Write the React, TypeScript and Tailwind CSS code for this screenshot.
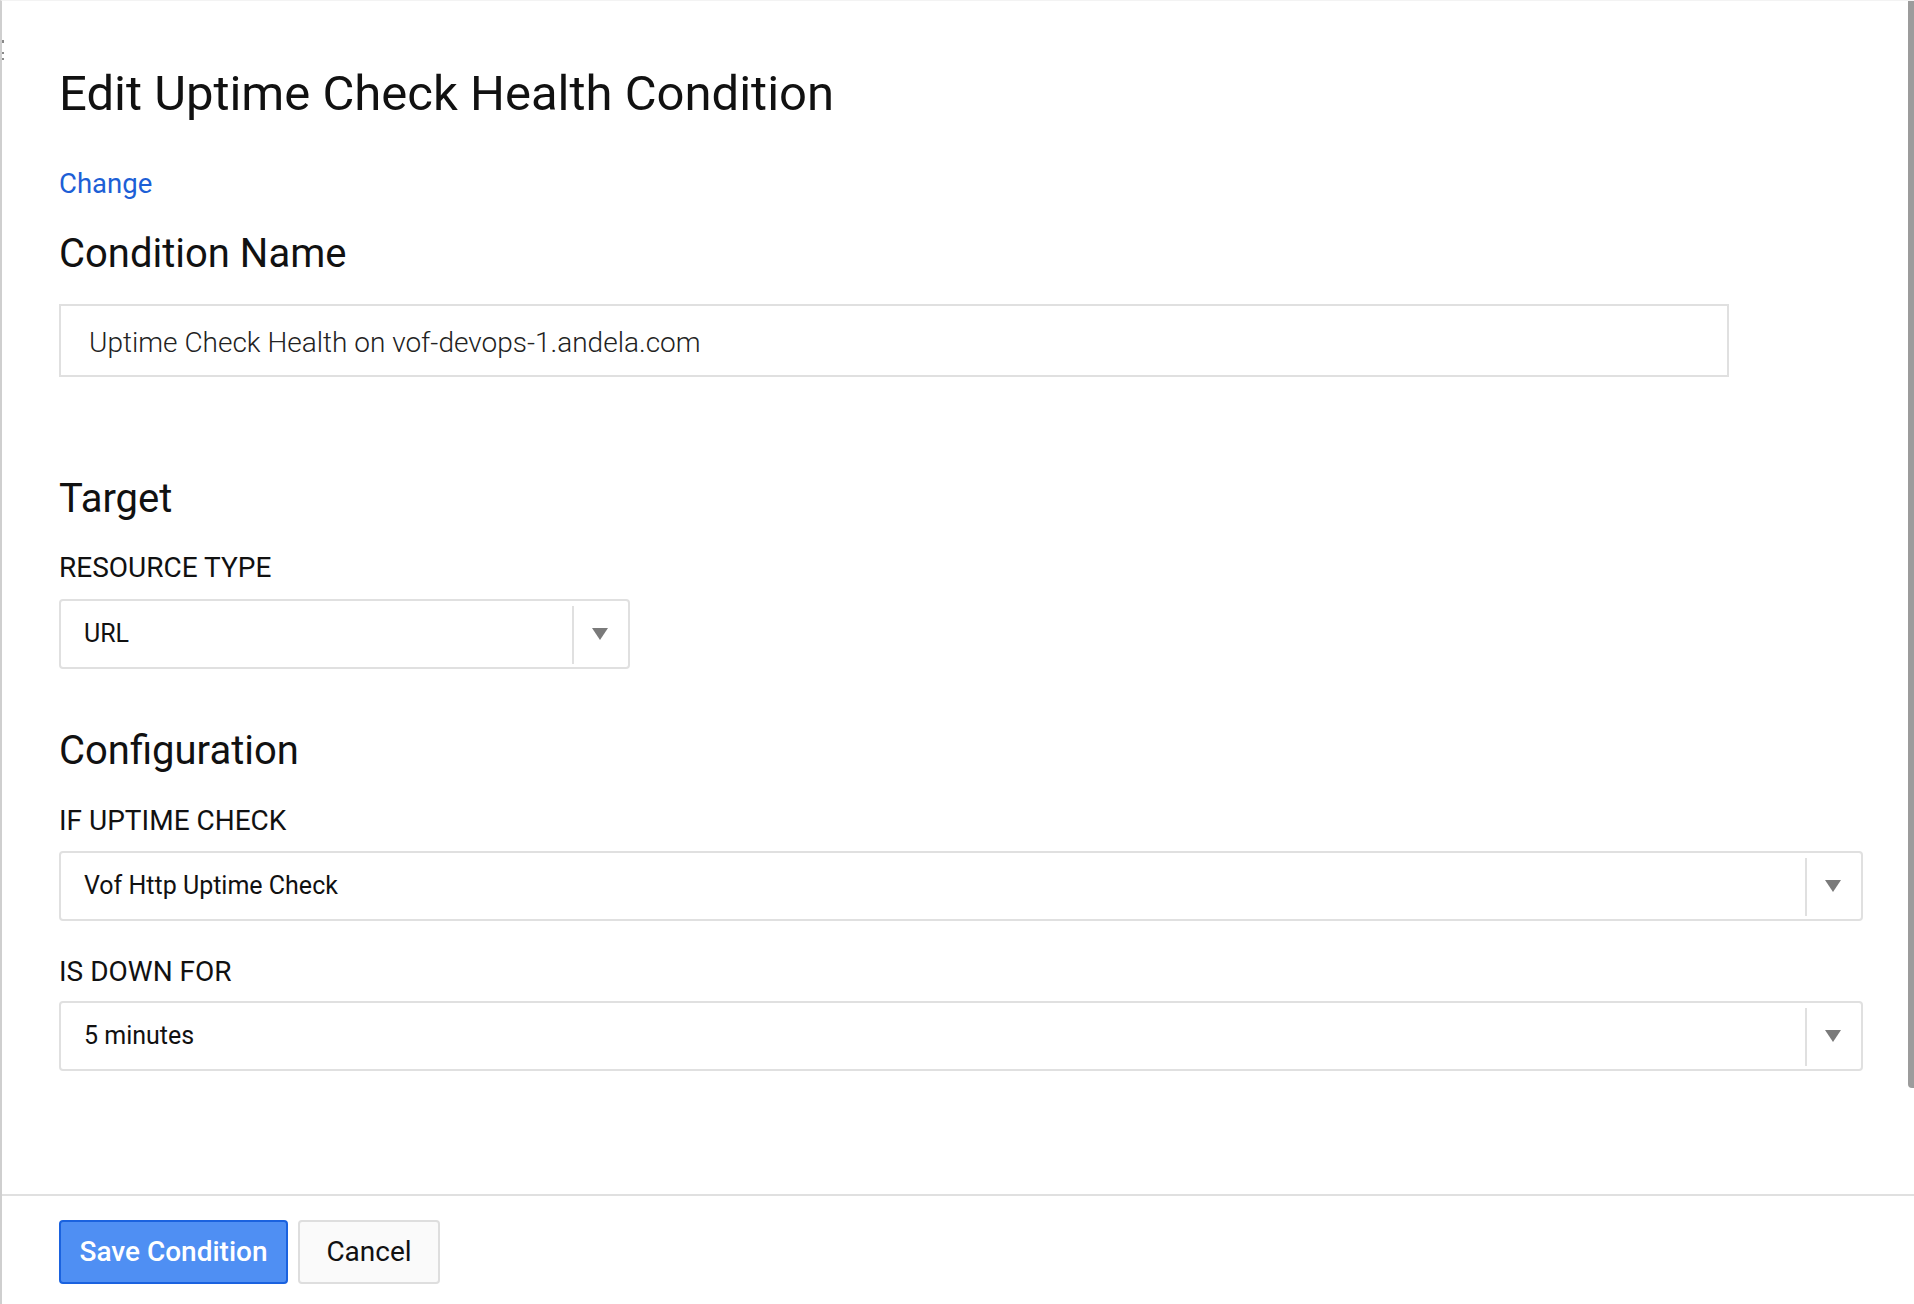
import { ReactNode } from 'react';

const font = { fontFamily: 'Roboto, "Liberation Sans", sans-serif' };

function Caret() {
  return (
    <svg width="16" height="12" viewBox="0 0 16 12" className="block">
      <path d="M0 0 H16 L8 12 Z" fill="#7a7a7a" />
    </svg>
  );
}

function Select({ value, width }: { value: string; width: string }) {
  return (
    <div className={`flex h-[70px] ${width} items-stretch rounded-[4px] border-2 border-[#e0e0e0] bg-white`}>
      <div className="flex flex-1 items-center pl-[23px] text-[25px] leading-[30px] text-[#111]">{value}</div>
      <div className="mt-[5px] mb-[3px] w-[2px] bg-[#e0e0e0]" />
      <div className="flex w-[54px] items-center justify-center pr-[2px]">
        <Caret />
      </div>
    </div>
  );
}

function Heading({ children, className = '' }: { children: ReactNode; className?: string }) {
  return <h2 className={`text-[40px] leading-[44px] font-normal text-[#111] ${className}`}>{children}</h2>;
}

function Label({ children, className = '' }: { children: ReactNode; className?: string }) {
  return <div className={`text-[28px] leading-[32px] text-[#111] ${className}`}>{children}</div>;
}

export default function App() {
  return (
    <div style={font} className="relative h-[1304px] w-full overflow-hidden border-t border-l-2 border-t-[#f3f3f3] border-l-[#cfcfcf] bg-white">
      {/* resize handle dots */}
      <span className="absolute top-[39px] left-0 h-[3px] w-[2px] bg-[#8a8a8a]" />
      <span className="absolute top-[51px] left-0 h-[2px] w-[2px] bg-[#8a8a8a]" />
      <span className="absolute top-[57px] left-0 h-[2px] w-[2px] bg-[#8a8a8a]" />

      {/* scrollbar */}
      <div className="absolute top-0 right-0 h-[1087px] w-[6px] rounded-bl-[4px] bg-[#9c9c9c]" />

      <div className="pr-[51px] pl-[57px]">
        <h1 className="mt-[65px] text-[49px] leading-[56px] font-normal text-[#111]">Edit Uptime Check Health Condition</h1>

        <a href="#" className="mt-[46px] block w-fit text-[27.5px] leading-[32px] text-[#1d5fd6]">
          Change
        </a>

        <Heading className="mt-[32px]">Condition Name</Heading>

        <div className="mt-[28px] flex h-[73px] w-[1670px] items-center border-2 border-[#e0e0e0] pt-[4px] pl-[28px] text-[28px] leading-[32px] font-light text-[#222]">
          Uptime Check Health on vof-devops-1.andela.com
        </div>

        <Heading className="mt-[100px]">Target</Heading>
        <Label className="mt-[31px]">RESOURCE TYPE</Label>
        <div className="mt-[15px]">
          <Select value="URL" width="w-[571px]" />
        </div>

        <Heading className="mt-[60px]">Configuration</Heading>
        <Label className="mt-[32px]">IF UPTIME CHECK</Label>
        <div className="mt-[14px]">
          <Select value="Vof Http Uptime Check" width="w-full" />
        </div>

        <Label className="mt-[35px]">IS DOWN FOR</Label>
        <div className="mt-[13px]">
          <Select value="5 minutes" width="w-full" />
        </div>
      </div>

      <div className="mt-[123px] border-t-2 border-[#e0e0e0]" />

      <div className="flex gap-[10px] pt-[24px] pl-[57px]">
        <button className="flex h-[64px] w-[229px] items-center justify-center rounded-[4px] border-2 border-[#1a62df] bg-[#4f8ff3] text-[28px] font-medium text-white">
          Save Condition
        </button>
        <button className="flex h-[64px] w-[142px] items-center justify-center rounded-[4px] border-2 border-[#dedede] bg-[#fafafa] text-[28px] text-[#111]">
          Cancel
        </button>
      </div>
    </div>
  );
}
